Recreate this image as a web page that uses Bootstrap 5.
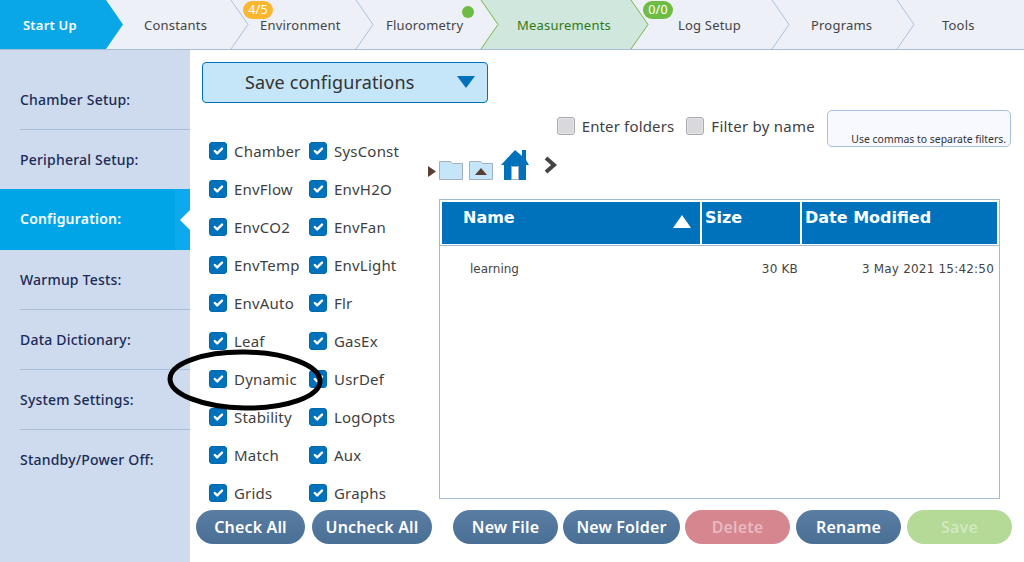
<!DOCTYPE html>
<html lang="en"><head><meta charset="utf-8"><title>Save configurations</title>
<link href="https://cdn.jsdelivr.net/npm/bootstrap@5.3.0/dist/css/bootstrap.min.css" rel="stylesheet">
<script src="https://cdn.jsdelivr.net/npm/bootstrap@5.3.0/dist/js/bootstrap.bundle.min.js"></script>
<style>
html,body{height:562px;overflow:hidden;background:#fff;font-family:"Noto Sans",sans-serif;color:#3f3f3f}
.topbar{height:50px;background:#eef0f8;border-bottom:1px solid #a7bcd6}
.bar-art{left:0;top:0;width:1024px;height:49px}
.step{height:49px;font-size:13px;letter-spacing:.2px;line-height:50px;color:#444;white-space:nowrap;position:relative}
.s1{width:123px;padding-left:23px;color:#fff;font-weight:600}
.s2{width:125px;padding-left:21px}
.s3{width:125px;padding-left:12px}
.s4{width:125px;padding-left:13px}
.s5{width:150px;padding-left:19px;color:#2f7a14}
.s6{width:141px;padding-left:30px}
.s7{width:125px;padding-left:22px}
.s8{width:110px;padding-left:28px}
.pill{position:absolute;left:-5px;top:1px;width:30px;height:18px;border-radius:9px;font-size:12.5px;line-height:18px;text-align:center;color:#fff}
.pill-o{background:#fbb62f}
.pill-g{background:#6fbc44}
.dot{position:absolute;left:89px;top:6px;width:12px;height:12px;border-radius:50%;background:#6fbc44}
.side{width:190px;height:512px;background:#cedaed;padding-top:20px;flex:none}
.side-item{height:60px;margin:0;padding:0 0 0 20px;font-size:14px;font-weight:500;letter-spacing:.2px;color:#1a2b57;line-height:59px;position:relative}
.side-rule{border-bottom:1px solid #a9bcd8;margin-left:20px;padding-left:0}
.side-on{background:#00a5e8;color:#fff;height:61px;margin-top:-1px;line-height:60px;font-weight:600}
.side-on::before{content:"";position:absolute;right:0;top:0;bottom:0;width:15px;background:#0ea8ec}
.side-on::after{content:"";position:absolute;right:0;top:21px;border:10px solid transparent;border-right-color:#fff;border-left-width:0}
.work{padding-left:6px;height:512px;min-width:0}
.picker{width:286px;height:41px;margin:12px 0 0 6px;background:#c5e5f8;border:1px solid #0072bc;border-radius:4px;font-size:18px;letter-spacing:.15px;color:#333;line-height:39px;padding:0 0 0 42px;position:relative}
.picker svg{position:absolute;right:12px;top:13px}
.mid{height:407px}
.leftcol{width:232px;flex:none;padding:38px 0 0 13px}
.chk-grid{display:grid;grid-template-columns:100px 100px;row-gap:18px}
.chk{height:20px;font-size:15px;letter-spacing:.2px;color:#3f3f3f;margin:0;white-space:nowrap}
.chk .form-check-input{width:18px;height:18px;margin:0 7px 0 0;flex:none;border-radius:3px;border:1px solid #0068ad;background-color:#0072bc;float:none}
.chk .form-check-input:not(:checked){background-color:#d9d9dd;border-color:#a9a9ae;box-shadow:inset 0 0 2px #fff}
.filter-row{height:37px;margin:7px 13px 0 0}
.filter-row .chk{margin:0 12px 5px 0;letter-spacing:.25px}
.filter-row .chk:first-child{margin-right:12px;letter-spacing:.15px}
.filter-box{width:184px;height:37px;background:#f8f8ff;border:1px solid #a7c0e0;border-radius:5px;font-size:10.45px;color:#333;text-align:right;padding:0 4px 1px 0;line-height:12px;white-space:nowrap}
.tools{height:32px;margin-top:3px}
.file-box{width:561px;height:300px;margin:17px 0 0 11px;border:1px solid #a2b9d8;flex:none}
.ftab{width:559px;border-collapse:separate;border-spacing:0;margin:0;table-layout:fixed;font-family:"DejaVu Sans",sans-serif}
.ftab th{background:#0072bc;color:#fff;font-size:16px;font-weight:700;height:45px;padding:6px 0 0 3px;vertical-align:top;border-style:solid;border-color:#fff;border-width:2px 2px 1px 0;background-clip:padding-box;line-height:20px}
.ftab th:first-child{border-left-width:2px;padding-left:21px}
.ftab td{font-size:12px;color:#444;border-top:1px solid #a2b9d8;height:46px;padding:0 5px 0 0;vertical-align:middle}
.ftab td:first-child{padding-left:30px}
.ftab .tail{text-align:right;letter-spacing:.2px}
.ftab td.sz{padding-right:4px}
.sort-tri{float:right;margin:7px 9px 0 0}
.foot{height:34px}
.pillbtn{height:34px;border:0;border-radius:17px;padding:0;font-size:16px;font-weight:600;letter-spacing:.15px;line-height:34px;color:#fff;background:linear-gradient(#5a7da3,#4a6f94)}
.pillbtn:disabled{opacity:1}
.b-del,.b-del:disabled{background:#d5868f;color:#e8bac0}
.b-sav,.b-sav:disabled{background:#b5d996;color:#d0e8bf}
.w109{width:109px}.w120{width:120px;margin-left:7px}
.w105{width:105px}.w117{width:117px}
.ml21{margin-left:21px}.ml5{margin-left:5px}.ml6{margin-left:6px}
.ring{left:166px;top:347px;width:158px;height:66px;pointer-events:none}
</style></head>
<body>
<nav class="topbar d-flex position-relative">
<svg class="bar-art position-absolute" viewBox="0 0 1024 49" aria-hidden="true">
<polygon points="0,0 106,0 123,24.5 106,49 0,49" fill="#09a7e6"/>
<polygon points="481,0 631,0 648,24.5 631,49 481,49 498,24.5" fill="#cfe7dd"/>
<g fill="none" stroke="#a9c0de" stroke-width="1">
<polyline points="231,0 248,24.5 231,49"/><polyline points="356,0 373,24.5 356,49"/>
<polyline points="772,0 789,24.5 772,49"/><polyline points="897,0 914,24.5 897,49"/></g>
<g fill="none" stroke="#77b84a" stroke-width="1">
<polyline points="481,0 498,24.5 481,49"/><polyline points="631,0 648,24.5 631,49"/></g>
</svg>
<div class="step s1">Start Up</div>
<div class="step s2">Constants</div>
<div class="step s3"><span class="pill pill-o">4/5</span>Environment</div>
<div class="step s4">Fluorometry<span class="dot"></span></div>
<div class="step s5">Measurements</div>
<div class="step s6"><span class="pill pill-g">0/0</span>Log Setup</div>
<div class="step s7">Programs</div>
<div class="step s8">Tools</div>
</nav>
<div class="d-flex">
<aside class="side">
<div class="side-item side-rule">Chamber Setup:</div>
<div class="side-item">Peripheral Setup:</div>
<div class="side-item side-on">Configuration:</div>
<div class="side-item side-rule">Warmup Tests:</div>
<div class="side-item side-rule">Data Dictionary:</div>
<div class="side-item side-rule">System Settings:</div>
<div class="side-item">Standby/Power Off:</div>
</aside>
<main class="work flex-grow-1 d-flex flex-column">
<div class="picker">Save configurations<svg width="18" height="12" viewBox="0 0 18 12"><polygon points="0,0 18,0 9,12" fill="#0072bc"/></svg></div>
<div class="mid d-flex">
<div class="leftcol">
<div class="chk-grid">
<label class="chk d-flex align-items-center"><input class="form-check-input" type="checkbox" checked>Chamber</label>
<label class="chk d-flex align-items-center"><input class="form-check-input" type="checkbox" checked>SysConst</label>
<label class="chk d-flex align-items-center"><input class="form-check-input" type="checkbox" checked>EnvFlow</label>
<label class="chk d-flex align-items-center"><input class="form-check-input" type="checkbox" checked>EnvH2O</label>
<label class="chk d-flex align-items-center"><input class="form-check-input" type="checkbox" checked>EnvCO2</label>
<label class="chk d-flex align-items-center"><input class="form-check-input" type="checkbox" checked>EnvFan</label>
<label class="chk d-flex align-items-center"><input class="form-check-input" type="checkbox" checked>EnvTemp</label>
<label class="chk d-flex align-items-center"><input class="form-check-input" type="checkbox" checked>EnvLight</label>
<label class="chk d-flex align-items-center"><input class="form-check-input" type="checkbox" checked>EnvAuto</label>
<label class="chk d-flex align-items-center"><input class="form-check-input" type="checkbox" checked>Flr</label>
<label class="chk d-flex align-items-center"><input class="form-check-input" type="checkbox" checked>Leaf</label>
<label class="chk d-flex align-items-center"><input class="form-check-input" type="checkbox" checked>GasEx</label>
<label class="chk d-flex align-items-center"><input class="form-check-input" type="checkbox" checked>Dynamic</label>
<label class="chk d-flex align-items-center"><input class="form-check-input" type="checkbox" checked>UsrDef</label>
<label class="chk d-flex align-items-center"><input class="form-check-input" type="checkbox" checked>Stability</label>
<label class="chk d-flex align-items-center"><input class="form-check-input" type="checkbox" checked>LogOpts</label>
<label class="chk d-flex align-items-center"><input class="form-check-input" type="checkbox" checked>Match</label>
<label class="chk d-flex align-items-center"><input class="form-check-input" type="checkbox" checked>Aux</label>
<label class="chk d-flex align-items-center"><input class="form-check-input" type="checkbox" checked>Grids</label>
<label class="chk d-flex align-items-center"><input class="form-check-input" type="checkbox" checked>Graphs</label>
</div>
</div>
<div class="flex-grow-1 d-flex flex-column">
<div class="filter-row d-flex justify-content-end align-items-center">
<label class="chk d-flex align-items-center"><input class="form-check-input" type="checkbox">Enter folders</label>
<label class="chk d-flex align-items-center"><input class="form-check-input" type="checkbox">Filter by name</label>
<div class="filter-box d-flex align-items-end justify-content-end"><span>Use commas to separate filters.</span></div>
</div>
<div class="tools">
<svg width="130" height="32" viewBox="428 150 130 32" class="d-block" role="img" aria-label="folder navigation">
<polygon points="428,166 436,171.5 428,177" fill="#5a3d33"/>
<path d="M439.5 179.5V161.5H450.5L452.5 163.5H462.5V179.5Z" fill="#c5e5f8" stroke="#a3b0bd"/>
<path d="M469.5 179.5V161.5H480.5L482.5 163.5H492.5V179.5Z" fill="#c5e5f8" stroke="#a3b0bd"/>
<polygon points="475,175 481,168 487,175" fill="#5a3d33"/>
<polygon points="501,165 515,150 522,156 522,150 526,150 526,160 529,165 526,165 526,180 504,180 504,165" fill="#0072bc"/>
<rect x="511.5" y="166.5" width="7" height="13" fill="#fff" stroke="#9fb0c2"/>
<polyline points="546,158 554,165 546,172" fill="none" stroke="#444" stroke-width="4"/>
</svg>
</div>
<div class="file-box">
<table class="ftab">
<colgroup><col style="width:262px"><col style="width:100px"><col></colgroup>
<thead><tr><th>Name<svg class="sort-tri" width="18" height="13" viewBox="0 0 18 13"><polygon points="0,13 18,13 9,0" fill="#fff"/></svg></th><th>Size</th><th>Date Modified</th></tr></thead>
<tbody><tr><td>learning</td><td class="tail sz">30 KB</td><td class="tail">3 May 2021 15:42:50</td></tr></tbody>
</table>
</div>
</div>
</div>
<div class="foot d-flex">
<button class="btn pillbtn w109" type="button">Check All</button>
<button class="btn pillbtn w120" type="button">Uncheck All</button>
<button class="btn pillbtn w105 ml21" type="button">New File</button>
<button class="btn pillbtn w117 ml5" type="button">New Folder</button>
<button class="btn pillbtn w105 ml5 b-del" type="button" disabled>Delete</button>
<button class="btn pillbtn w105 ml6" type="button">Rename</button>
<button class="btn pillbtn w105 ml6 b-sav" type="button" disabled>Save</button>
</div>
</main>
</div>
<svg class="ring position-absolute" viewBox="0 0 158 66" aria-hidden="true"><ellipse cx="79" cy="33" rx="75" ry="28" transform="rotate(1 79 33)" fill="none" stroke="#000" stroke-width="5"/></svg>
</body></html>
